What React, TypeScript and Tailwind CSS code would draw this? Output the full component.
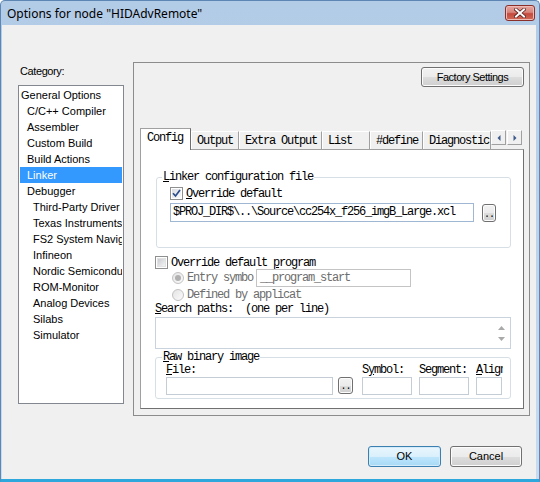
import React from "react";

const MONO = "font-['Liberation_Mono',monospace] text-[12px] tracking-[-1.2px] text-black";
const SANS = "font-['Liberation_Sans',Arial,sans-serif] text-[11px] text-black";
const BTN =
  "rounded-[3px] border border-[#707070] bg-[linear-gradient(#f2f2f2_0%,#ebebeb_50%,#dddddd_51%,#cfcfcf_100%)] shadow-[inset_0_0_0_1px_#fcfcfc]";

function CheckBox({ checked }: { checked?: boolean }) {
  return (
    <div className="w-[13px] h-[13px] border border-[#8e8f8f] bg-white p-[1px] shrink-0">
      <div
        className={
          checked
            ? "w-full h-full bg-linear-to-br from-[#d8dbe0] to-[#fbfbfb] flex items-center justify-center"
            : "w-full h-full bg-linear-to-br from-[#c9ccd1] to-[#f4f4f4] border border-[#e2e2e2]"
        }
      >
        {checked && (
          <svg width="9" height="9" viewBox="0 0 9 9">
            <path d="M1 4.2 L3.5 7 L8 1" stroke="#2c4d8c" strokeWidth="1.7" fill="none" />
          </svg>
        )}
      </div>
    </div>
  );
}

function Radio({ on }: { on?: boolean }) {
  return (
    <div className="w-[12px] h-[12px] rounded-full border border-[#c2c2c2] bg-linear-to-br from-[#e4e4e4] to-[#fbfbfb] flex items-center justify-center shrink-0">
      {on && <div className="w-[6px] h-[6px] rounded-full bg-[#b0b0b0]" />}
    </div>
  );
}

function DotsBtn({ w, h }: { w: string; h: string }) {
  return (
    <div className={`${w} ${h} ${BTN} flex items-end justify-center`}>
      <span className="font-['Liberation_Mono',monospace] text-[10px] tracking-[-1px] leading-[12px] text-black">..</span>
    </div>
  );
}

const cats: { t: string; l: number; sel?: boolean }[] = [
  { t: "General Options", l: 0 },
  { t: "C/C++ Compiler", l: 1 },
  { t: "Assembler", l: 1 },
  { t: "Custom Build", l: 1 },
  { t: "Build Actions", l: 1 },
  { t: "Linker", l: 1, sel: true },
  { t: "Debugger", l: 1 },
  { t: "Third-Party Driver", l: 2 },
  { t: "Texas Instruments", l: 2 },
  { t: "FS2 System Navigator", l: 2 },
  { t: "Infineon", l: 2 },
  { t: "Nordic Semiconductor", l: 2 },
  { t: "ROM-Monitor", l: 2 },
  { t: "Analog Devices", l: 2 },
  { t: "Silabs", l: 2 },
  { t: "Simulator", l: 2 },
];

const tabs: { t: string; w: string }[] = [
  { t: "Output", w: "w-[48px]" },
  { t: "Extra Output", w: "w-[83px]" },
  { t: "List", w: "w-[48px]" },
  { t: "#define", w: "w-[53px]" },
  { t: "Diagnostics", w: "w-[68px]" },
];

export default function App() {
  return (
    <div className="w-[540px] h-[482px] overflow-hidden flex flex-col bg-linear-to-b from-[#b2cbe6] to-[#c8dbef] border-t border-l border-r border-[#5d86b4] border-b-[3px] border-b-[#2ea7dd] rounded-t-[5px]">
      {/* title bar */}
      <div className="h-[24px] flex items-start justify-between shrink-0">
        <div className="ml-[6px] mt-[5px] leading-[16px] font-['Noto_Sans',sans-serif] text-[12px] text-black">
          Options for node "HIDAdvRemote"
        </div>
        <div className="mt-[4px] mr-[4px] w-[30px] h-[16px] rounded-[3px] border border-[#8a2f2a] bg-[linear-gradient(#e7a59e_0%,#d8857b_45%,#c44a3e_55%,#cf6a55_100%)] shadow-[inset_0_0_0_1px_#eebcb6] flex items-center justify-center">
          <svg width="12" height="10" viewBox="0 0 12 10">
            <path d="M2 1.5 L10 8.5 M10 1.5 L2 8.5" stroke="#5a2020" strokeWidth="3.6" strokeLinecap="square" />
            <path d="M2 1.5 L10 8.5 M10 1.5 L2 8.5" stroke="#ffffff" strokeWidth="2" strokeLinecap="square" />
          </svg>
        </div>
      </div>

      {/* client */}
      <div className="flex-1 ml-[1px] mr-[3px] bg-[#f0f0f0] flex flex-col">
        <div className="flex items-start h-[391px]">
          {/* left column */}
          <div className="ml-[16px] flex flex-col w-[106px]">
            <div className={`${SANS} mt-[39px] ml-[2px] h-[14px] leading-[14px] tracking-[-0.4px]`}>Category:</div>
            <div className="mt-[7px] h-[319px] w-[106px] border border-[#828790] bg-white p-[1px] overflow-hidden">
              {cats.map((c) => (
                <div
                  key={c.t}
                  className={`${SANS} h-[16px] leading-[16px] whitespace-nowrap overflow-hidden ${
                    c.l === 0 ? "pl-[1px]" : c.l === 1 ? "pl-[7px]" : "pl-[13px]"
                  } ${c.sel ? "bg-[#3399ff] text-white" : ""}`}
                >
                  {c.t}
                </div>
              ))}
            </div>
          </div>

          {/* right panel */}
          <div className="ml-[9px] mt-[37px] w-[397px] h-[354px] border border-[#8c8c8c] flex flex-col">
            <div className="flex justify-end mt-[4px] mr-[5px]">
              <div className={`w-[103px] h-[20px] ${BTN} ${SANS} tracking-[-0.5px] flex items-center justify-center`}>
                Factory Settings
              </div>
            </div>

            {/* tab strip */}
            <div className="mt-[41px] ml-[6px] h-[21px] flex items-end">
              <div className={`relative z-10 w-[51px] h-[22px] -mb-[1px] bg-white border-t border-l border-[#a0a0a0] border-r border-r-[#6f6f6f] pl-[6px] pt-[2px] ${MONO} leading-[14px]`}>
                Config
              </div>
              {tabs.map((t) => (
                <div
                  key={t.t}
                  className={`${t.w} h-[18px] bg-[#f0f0f0] border-t border-l border-white border-r border-r-[#a0a0a0] pl-[5px] pt-[2px] ${MONO} leading-[14px] whitespace-nowrap overflow-hidden`}
                >
                  {t.t}
                </div>
              ))}
              <div className="mb-[4px] flex">
                <div className="w-[15px] h-[15px] bg-[#f0f0f0] border border-white border-r-[#a0a0a0] border-b-[#a0a0a0] flex items-center justify-center">
                  <svg width="4" height="6" viewBox="0 0 4 6">
                    <path d="M3.5 0 L0.5 3 L3.5 6 Z" fill="#3d5a8a" />
                  </svg>
                </div>
                <div className="ml-[1px] w-[15px] h-[15px] bg-[#f0f0f0] border border-white border-r-[#a0a0a0] border-b-[#a0a0a0] flex items-center justify-center">
                  <svg width="4" height="6" viewBox="0 0 4 6">
                    <path d="M0.5 0 L3.5 3 L0.5 6 Z" fill="#3d5a8a" />
                  </svg>
                </div>
              </div>
            </div>

            {/* page */}
            <div className={`ml-[6px] w-[384px] h-[260px] border border-[#a0a0a0] border-r-[#707070] border-b-[#707070] bg-white pl-[14px] flex flex-col ${MONO}`}>
              <fieldset className="ml-[1px] mt-[20px] w-[355px] h-[78px] border border-[#d5dfe5] rounded-[3px] p-0 m-0 min-w-0">
                <legend className="ml-[5px] px-[1px] leading-[14px]">
                  <span className="underline underline-offset-[1px]">L</span>inker configuration file
                </legend>
                <div className="pl-[13px] pt-[3px]">
                  <div className="flex items-center h-[13px]">
                    <CheckBox checked />
                    <span className="ml-[3px] leading-[14px]">
                      <span className="underline underline-offset-[1px]">O</span>verride default
                    </span>
                  </div>
                  <div className="flex items-start mt-[3px]">
                    <div className="w-[304px] h-[19px] border border-[#9fb7d2] bg-white pl-[2px] leading-[17px] whitespace-nowrap overflow-hidden">
                      {"$PROJ_DIR$\\..\\Source\\cc254x_f256_imgB_Large.xcl"}
                    </div>
                    <div className="ml-[8px] mt-[1px]">
                      <DotsBtn w="w-[14px]" h="h-[18px]" />
                    </div>
                  </div>
                </div>
              </fieldset>

              <div className="mt-[8px] flex items-center h-[13px]">
                <CheckBox />
                <span className="ml-[3px] leading-[14px]">
                  Override default <span className="underline underline-offset-[1px]">p</span>rogram
                </span>
              </div>
              <div className="flex items-center h-[18px] pl-[17px]">
                <Radio on />
                <span className="ml-[3px] w-[67px] overflow-hidden whitespace-nowrap text-[#6d6d6d] leading-[14px]">
                  Entry symbol
                </span>
                <div className="ml-[2px] w-[155px] h-[18px] border border-[#c4c4c4] bg-white pl-[3px] leading-[16px] text-[#6d6d6d]">
                  __program_start
                </div>
              </div>
              <div className="mt-[1px] flex items-center h-[14px] pl-[17px]">
                <Radio />
                <span className="ml-[3px] w-[115px] overflow-hidden whitespace-nowrap text-[#6d6d6d] leading-[14px]">
                  Defined by application
                </span>
              </div>
              <div className="h-[14px] leading-[14px] whitespace-pre">
                <span className="underline underline-offset-[1px]">S</span>earch paths:  (one per line)
              </div>
              <div className="mt-[1px] w-[356px] h-[32px] border border-[#c9d3dd] bg-white flex justify-end">
                <div className="w-[17px] h-full flex flex-col items-center justify-center gap-[7px]">
                  <svg width="7" height="4" viewBox="0 0 7 4">
                    <path d="M0 4 L3.5 0 L7 4 Z" fill="#a9a9a9" />
                  </svg>
                  <svg width="7" height="4" viewBox="0 0 7 4">
                    <path d="M0 0 L3.5 4 L7 0 Z" fill="#a9a9a9" />
                  </svg>
                </div>
              </div>

              <fieldset className="mt-[1px] w-[356px] h-[49px] border border-[#d5dfe5] rounded-[3px] p-0 m-0 min-w-0">
                <legend className="ml-[6px] px-[1px] leading-[14px]">
                  <span className="underline underline-offset-[1px]">R</span>aw binary image
                </legend>
                <div className="pl-[10px] flex items-start">
                  <div className="w-[167px] flex flex-col">
                    <div className="h-[13px] leading-[13px]">
                      <span className="underline underline-offset-[1px]">F</span>ile:
                    </div>
                    <div className="w-[167px] h-[18px] border border-[#c4ccd5] bg-white" />
                  </div>
                  <div className="ml-[5px] mt-[13px]">
                    <DotsBtn w="w-[15px]" h="h-[17px]" />
                  </div>
                  <div className="ml-[9px] w-[50px] flex flex-col">
                    <div className="h-[13px] leading-[13px] whitespace-nowrap">
                      S<span className="underline underline-offset-[1px]">y</span>mbol:
                    </div>
                    <div className="w-[50px] h-[18px] border border-[#c4ccd5] bg-white" />
                  </div>
                  <div className="ml-[7px] w-[50px] flex flex-col">
                    <div className="h-[13px] leading-[13px] whitespace-nowrap">Segment:</div>
                    <div className="w-[50px] h-[18px] border border-[#c4ccd5] bg-white" />
                  </div>
                  <div className="ml-[7px] w-[26px] flex flex-col">
                    <div className="h-[13px] leading-[13px] whitespace-nowrap overflow-hidden w-[27px]">
                      <span className="underline underline-offset-[1px]">A</span>lign:
                    </div>
                    <div className="w-[26px] h-[18px] border border-[#c4ccd5] bg-white" />
                  </div>
                </div>
              </fieldset>
            </div>
          </div>
        </div>

        {/* bottom buttons */}
        <div className="mt-[30px] flex justify-end pr-[14px]">
          <div className="w-[73px] h-[21px] rounded-[3px] border border-[#3c7fb1] bg-[linear-gradient(#eaf6fd_0%,#d9f0fc_50%,#bee6fd_51%,#a7d9f5_100%)] shadow-[inset_0_0_0_1px_#d4ecfa] flex items-center justify-center">
            <span className={SANS}>OK</span>
          </div>
          <div className={`ml-[9px] w-[72px] h-[21px] ${BTN} flex items-center justify-center`}>
            <span className={SANS}>Cancel</span>
          </div>
        </div>
      </div>
    </div>
  );
}
